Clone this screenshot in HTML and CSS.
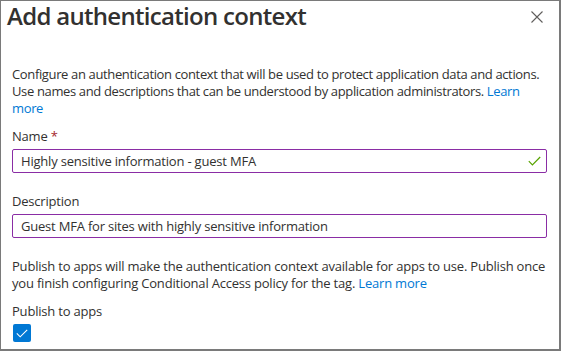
FILE: index.html
```html
<!DOCTYPE html>
<html lang="en">
<head>
  <meta charset="UTF-8">
  <title>Add authentication context</title>
  <link rel="stylesheet" href="styles.css">
</head>
<body>

  <div class="panel">
    <!-- Header -->
    <div class="panel-header">
      <h1>Add authentication context</h1>
      <button class="close" aria-label="Close">
        <svg width="12" height="12" viewBox="0 0 12 12"><path d="M0.5 0.5 L11.5 11.5 M11.5 0.5 L0.5 11.5" stroke="#605e5c" stroke-width="1.1" fill="none"/></svg>
      </button>
    </div>

    <div class="panel-body">
      <p class="text intro">Configure an authentication context that will be used to protect application data and actions. Use names and descriptions that can be understood by application administrators. <a href="#">Learn more</a></p>

      <!-- Name -->
      <div class="field">
        <label>Name <span class="req">*</span></label>
        <div class="input-wrap">
          <input value="Highly sensitive information - guest MFA" />
          <svg class="valid" width="13" height="10" viewBox="0 0 13 10"><path d="M0.8 5.2 L4.4 8.8 L12.2 1" stroke="#57a300" stroke-width="1.2" fill="none"/></svg>
        </div>
      </div>

      <!-- Description -->
      <div class="field">
        <label>Description</label>
        <div class="input-wrap">
          <input value="Guest MFA for sites with highly sensitive information" />
        </div>
      </div>

      <p class="text publish-note">Publish to apps will make the authentication context available for apps to use. Publish once you finish configuring Conditional Access policy for the tag. <a href="#">Learn more</a></p>

      <div class="field">
        <label>Publish to apps</label>
        <span class="checkbox">
          <svg width="12" height="9" viewBox="0 0 12 9"><path d="M0.8 4.4 L4.2 7.8 L11.2 0.8" stroke="#fff" stroke-width="1.1" fill="none"/></svg>
        </span>
      </div>
    </div>
  </div>

</body>
</html>
```

FILE: styles.css
```css
body { margin: 0; font-family: "Open Sans", "Noto Sans", sans-serif; color: #323130; background: #fff; }
.panel {
  box-sizing: border-box; width: 561px; height: 351px;
  border: 1px solid #7a7a7a; border-right-width: 2px; border-bottom-width: 2px;
  overflow: hidden;
}
.panel-header { display: flex; justify-content: space-between; align-items: flex-start; padding: 0 16px 0 6px; }
.panel-header h1 { margin: 0; font-size: 24px; font-weight: 600; line-height: 30px; letter-spacing: -0.7px; color: #323130; }
.close { border: 0; background: none; padding: 0; margin-top: 10px; width: 12px; height: 12px; cursor: pointer; }
.close svg { display: block; }

.panel-body { padding: 35px 12px 0 11px; }
.text { margin: 0; font-size: 13px; line-height: 17px; letter-spacing: -0.2px; }
.text a { color: #0078d4; text-decoration: none; }
.intro { margin-bottom: 9px; letter-spacing: -0.36px; }

.field { margin-bottom: 18px; }
.field label { display: block; font-size: 13px; line-height: 20px; letter-spacing: -0.2px; margin-bottom: 3px; }
.req { color: #a4262c; }
.input-wrap { position: relative; width: 535px; }
.input-wrap input {
  display: block; box-sizing: border-box; width: 100%; height: 24px; margin: 0;
  padding: 0 8px; border: 1px solid #8a2da5; border-radius: 2px;
  font-family: inherit; font-size: 13px; letter-spacing: -0.2px; color: #323130; outline: none;
}
.valid { position: absolute; right: 6px; top: 7px; }

.publish-note { margin-bottom: 9px; padding-top: 2px; }
.checkbox {
  display: flex; align-items: center; justify-content: center;
  width: 18px; height: 18px; margin-left: 1px; background: #0078d4; border-radius: 2px;
}
```
